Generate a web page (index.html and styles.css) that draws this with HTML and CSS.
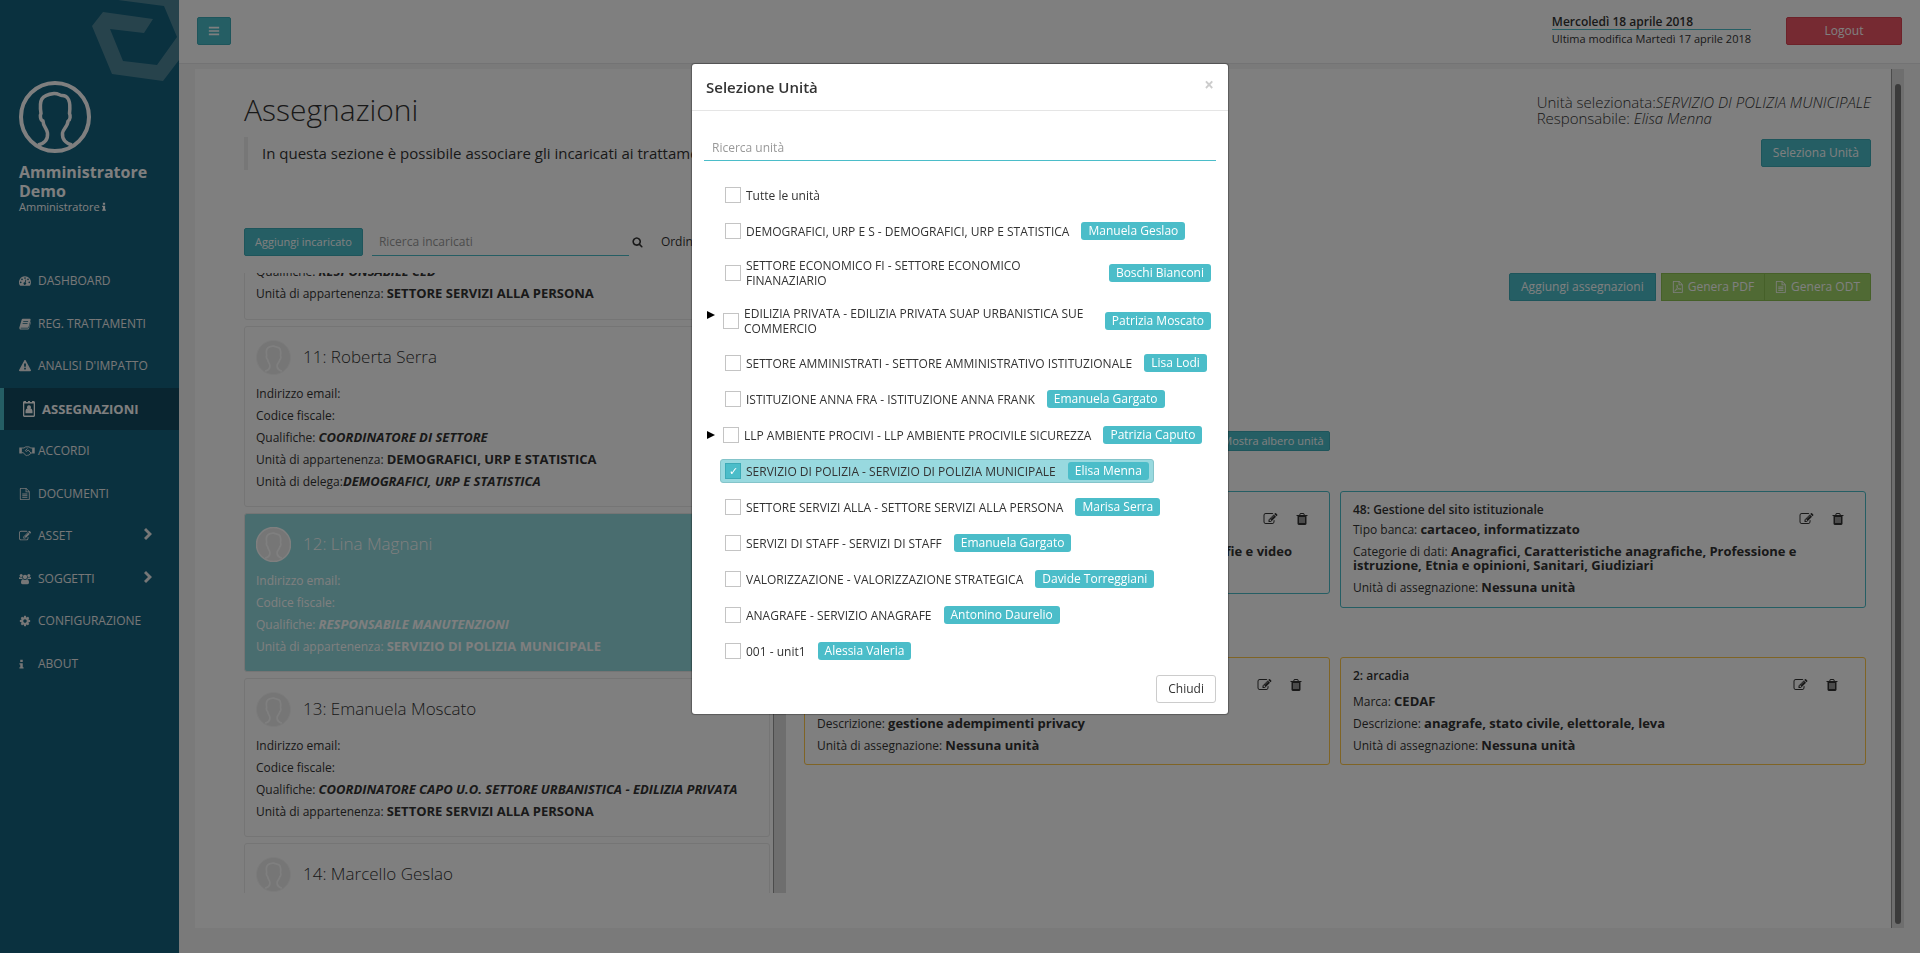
FILE: index.html
```html
<!DOCTYPE html>
<html lang="it">
<head>
<meta charset="utf-8">
<title>Assegnazioni</title>
<link rel="stylesheet" href="styles.css">
</head>
<body>
<svg class="sprite" aria-hidden="true">
  <symbol id="bars" viewBox="0 0 14 14"><path d="M1 2h12v2H1zM1 6h12v2H1zM1 10h12v2H1z"/></symbol>
  <symbol id="dashboard" viewBox="0 0 14 14"><path fill-rule="evenodd" d="M7 1.500a7 7 0 0 1 7 7c0 1.400-.4 2.700-1.100 3.800-.1.100-.2.200-.4.200H1.500c-.2 0-.3-.1-.4-.2A7 7 0 0 1 7 1.500zM2 7.500a1 1 0 1 0 0 2 1 1 0 0 0 0-2zM3.500 4a1 1 0 1 0 0 2 1 1 0 0 0 0-2zM7 2.500a1 1 0 1 0 0 2 1 1 0 0 0 0-2zM10.500 4a1 1 0 1 0 0 2 1 1 0 0 0 0-2zM12 7.500a1 1 0 1 0 0 2 1 1 0 0 0 0-2zM7.600 5.200l-.9 3.300a1.500 1.500 0 1 0 1 .3l.8-3.300z"/></symbol>
  <symbol id="book" viewBox="0 0 14 14"><path fill-rule="evenodd" d="M4.500 1h8c.7 0 1.200.7 1 1.400l-2.300 8c-.2.700-.8 1-1.500 1H2.500c-.6 0-.8.500-.4.900h8.200c.6 0 1-.3 1.200-.8L13.600 4c.4.300.5.700.3 1.200l-2.200 7.100c-.2.700-.9 1.200-1.600 1.200H2.200C.8 13.500 0 12 .5 10.800L3 2.200C3.200 1.500 3.800 1 4.500 1zm.6 2.500-.3 1h5.700l.3-1zm-.7 2.300-.3 1h5.700l.3-1z"/></symbol>
  <symbol id="warning" viewBox="0 0 1792 1792"><path d="M1024 1375v-190q0-14-9.500-23.500t-22.500-9.500h-192q-13 0-22.500 9.500t-9.500 23.500v190q0 14 9.500 23.500t22.500 9.500h192q13 0 22.500-9.500t9.500-23.500zm-2-374l18-459q0-12-10-19-13-11-24-11h-220q-11 0-24 11-10 7-10 21l17 457q0 10 10 16.500t24 6.500h185q14 0 23.500-6.500t10.500-16.500zm-14-934l768 1408q35 63-2 126-17 29-46.500 46t-63.500 17h-1536q-34 0-63.500-17t-46.500-46q-37-63-2-126l768-1408q17-31 47-49t65-18 65 18 47 49z"/></symbol>
  <symbol id="badge" viewBox="0 0 12 16"><path fill-rule="evenodd" d="M1 0h2v1h2V0h2v1h2V0h2l1 1v14l-1 1H1l-1-1V1zM1.300 2.500v12h9.400v-12zM6 4.300a1.900 1.900 0 0 1 1.500 3.200C9 7.700 9.500 9 9.500 10.500v1.800h-7v-1.800C2.500 9 3 7.700 4.500 7.500A1.900 1.900 0 0 1 6 4.300z"/></symbol>
  <symbol id="handshake" viewBox="0 0 18 14"><path fill="none" stroke="currentColor" stroke-width="1.100" d="M3 3.500h2.500l2-1.300h3.800L13.500 3.500H15M3 9h1.500l3.200 3c.8.600 1.500.5 1.900-.1 1 .4 1.600 0 1.900-.8.900.1 1.400-.4 1.500-1.200L15 9M9.500 4 7.300 6.300c-.4.700.7 1.600 1.500.9l1.700-1.300 3.200 3.600"/><path d="M0 2.800h3v7H0zM15 2.800h3v7h-3z"/></symbol>
  <symbol id="file" viewBox="0 0 14 14"><path fill-rule="evenodd" d="M1.700 0H8.500L12.500 4v9.200c0 .4-.3.800-.8.800h-10c-.4 0-.7-.4-.7-.8V.8C1 .4 1.300 0 1.700 0zM2 1v12h9.500V5H7.700V1zM8.700 1.300V4h2.600zM3.800 6.500h6v1h-6zM3.800 8.500h6v1h-6zM3.800 10.500h6v1h-6z"/></symbol>
  <symbol id="pdf" viewBox="0 0 14 14"><path fill-rule="evenodd" d="M1.700 0H8.500L12.500 4v9.200c0 .4-.3.800-.8.800h-10c-.4 0-.7-.4-.7-.8V.8C1 .4 1.300 0 1.700 0zM2 1v12h9.500V5H7.700V1zM8.700 1.300V4h2.600z"/><path fill="none" stroke="currentColor" stroke-width=".8" d="M3.300 12c1.500-.8 3-4.200 3-6.500 0-1-.8-1-.7 0 .2 2.300 2.200 4.200 4.600 4.200.8 0 .7-.8-.2-.8-2 0-4.500.8-6 1.700-1 .6-1.200 1.300-.7 1.400z"/></symbol>
  <symbol id="edit" viewBox="0 0 1792 1792"><path d="M888 1184l116-116-152-152-116 116v56h96v96h56zm440-720q-16-16-33 1l-350 350q-17 17-1 33t33-1l350-350q17-17 1-33zm80 594v190q0 119-84.500 203.500t-203.500 84.500h-832q-119 0-203.500-84.500t-84.500-203.500v-832q0-119 84.500-203.500t203.500-84.500h832q63 0 117 25 15 7 18 23 3 17-9 29l-49 49q-14 14-32 8-23-6-45-6h-832q-66 0-113 47t-47 113v832q0 66 47 113t113 47h832q66 0 113-47t47-113v-126q0-13 9-22l64-64q15-15 35-7t20 29zm-96-738l288 288-672 672h-288v-288zm444 132l-92 92-288-288 92-92q28-28 68-28t68 28l152 152q28 28 28 68t-28 68z"/></symbol>
  <symbol id="users" viewBox="0 0 15 14"><circle cx="7.500" cy="4.500" r="2.700"/><circle cx="2.700" cy="2.700" r="1.900"/><circle cx="12.300" cy="2.700" r="1.900"/><path d="M5 7.200c1.500 1.200 3.500 1.200 5 0 1.700.2 2.500 1.800 2.500 4.300 0 1.300-.8 2-2 2h-6c-1.200 0-2-.7-2-2 0-2.500.8-4.100 2.500-4.300zM0 7V6c0-.9.400-1.500 1-1.600 1 .8 2.200.8 3 .3C4 5.500 4.300 6.300 4.700 7zM15 7V6c0-.9-.4-1.500-1-1.600-1 .8-2.200.8-3 .3 0 .8-.3 1.600-.7 2.300z"/></symbol>
  <symbol id="cog" viewBox="0 0 1792 1792"><path d="M1152 896q0-106-75-181t-181-75-181 75-75 181 75 181 181 75 181-75 75-181zm512-109v222q0 12-8 23t-20 13l-185 28q-19 54-39 91 35 50 107 138 10 12 10 25t-9 23q-27 37-99 108t-94 71q-12 0-26-9l-138-108q-44 23-91 38-16 136-29 186-7 28-36 28h-222q-14 0-24.500-8.500t-11.500-21.500l-28-184q-49-16-90-37l-141 107q-10 9-25 9-14 0-25-11-126-114-165-168-7-10-7-23 0-12 8-23 15-21 51-66.500t54-70.500q-27-50-41-99l-183-27q-13-2-21-12.500t-8-23.500v-222q0-12 8-23t19-13l186-28q14-46 39-92-40-57-107-138-10-12-10-24 0-10 9-23 26-36 98.500-107.500t94.500-71.500q13 0 26 10l138 107q44-23 91-38 16-136 29-186 7-28 36-28h222q14 0 24.500 8.500t11.500 21.500l28 184q49 16 90 37l142-107q9-9 24-9 13 0 25 10 129 119 165 170 7 8 7 22 0 12-8 23-15 21-51 66.500t-54 70.500q26 50 41 98l183 28q13 2 21 12.500t8 23.500z"/></symbol>
  <symbol id="info" viewBox="0 0 5 12"><path d="M1 1h3v2.500H1zM0 5h4v5h1v1.500H0V10h1V6.500H0z"/></symbol>
  <symbol id="chevron" viewBox="0 0 8 12"><path d="M0 2l2-2 6 6-6 6-2-2 4-4z"/></symbol>
  <symbol id="triangle" viewBox="0 0 8 8"><path d="M0 0l8 4-8 4z"/></symbol>
  <symbol id="search" viewBox="0 0 1792 1792"><path d="M1216 832q0-185-131.500-316.500t-316.500-131.500-316.500 131.500-131.500 316.500 131.500 316.500 316.500 131.500 316.500-131.500 131.500-316.500zm512 832q0 52-38 90t-90 38q-54 0-90-38l-343-342q-179 124-399 124-143 0-273.500-55.500t-225-150-150-225-55.500-273.500 55.500-273.500 150-225 225-150 273.500-55.500 273.500 55.500 225 150 150 225 55.500 273.500q0 220-124 399l343 343q37 37 37 90z"/></symbol>
  <symbol id="trash" viewBox="128 0 1536 1792"><path d="M704 1376v-704q0-14-9-23t-23-9h-64q-14 0-23 9t-9 23v704q0 14 9 23t23 9h64q14 0 23-9t9-23zm256 0v-704q0-14-9-23t-23-9h-64q-14 0-23 9t-9 23v704q0 14 9 23t23 9h64q14 0 23-9t9-23zm256 0v-704q0-14-9-23t-23-9h-64q-14 0-23 9t-9 23v704q0 14 9 23t23 9h64q14 0 23-9t9-23zm-544-992h448l-48-117q-7-9-17-11h-317q-10 2-17 11zm928 32v64q0 14-9 23t-23 9h-96v948q0 83-47 143.500t-113 60.500h-832q-66 0-113-58.500t-47-141.500v-952h-96q-14 0-23-9t-9-23v-64q0-14 9-23t23-9h309l70-167q15-37 54-63t79-26h320q40 0 79 26t54 63l70 167h309q14 0 23 9t9 23z"/></symbol>
  <symbol id="person" viewBox="0 0 72 72"><path fill="none" stroke="currentColor" stroke-width="3.500" stroke-linejoin="round" d="M19 64c8-2 10-7 9.500-12-.4-4-4.500-7-4.500-12-3-1-3-6-2-7.500C20 19 22 14 35 12.500c4-.3 6 2 8 2 6 0 9 5 7.500 18 1 2 1 6.500-1.500 7.500 0 5-5 8-5.500 12C43 58 46 62 53 64"/></symbol>
</svg>

<div class="app">
  <aside class="sidebar">
    <svg class="brand" viewBox="0 0 87 82" aria-hidden="true"><path d="M26 0h61v60L71 81 20 74 0 26 11 12l50 7-9 14-34-4 13 32 34 4 20-28L72 6z"/></svg>
    <svg class="avatar" viewBox="0 0 72 72" aria-hidden="true"><circle cx="36" cy="36" r="34" fill="none" stroke="currentColor" stroke-width="4"/><use href="#person"/></svg>
    <strong class="user-name">Amministratore Demo</strong>
    <span class="user-role">Amministratore <svg class="info-icon"><use href="#info"/></svg></span>
    <nav class="menu">
      <a href="#"><svg class="icon"><use href="#dashboard"/></svg>DASHBOARD</a>
      <a href="#"><svg class="icon"><use href="#book"/></svg>REG. TRATTAMENTI</a>
      <a href="#"><svg class="icon"><use href="#warning"/></svg>ANALISI D'IMPATTO</a>
      <a href="#" class="active"><svg class="icon tall"><use href="#badge"/></svg>ASSEGNAZIONI</a>
      <a href="#"><svg class="icon wide"><use href="#handshake"/></svg>ACCORDI</a>
      <a href="#"><svg class="icon"><use href="#file"/></svg>DOCUMENTI</a>
      <a href="#"><svg class="icon"><use href="#edit"/></svg>ASSET<svg class="chevron"><use href="#chevron"/></svg></a>
      <a href="#"><svg class="icon"><use href="#users"/></svg>SOGGETTI<svg class="chevron"><use href="#chevron"/></svg></a>
      <a href="#"><svg class="icon"><use href="#cog"/></svg>CONFIGURAZIONE</a>
      <a href="#"><svg class="icon slim"><use href="#info"/></svg>ABOUT</a>
    </nav>
  </aside>

  <div class="main">
    <header class="topbar">
      <button class="btn burger" aria-label="Menu"><svg class="icon"><use href="#bars"/></svg></button>
      <div class="dates"><strong>Mercoledì 18 aprile 2018</strong><span>Ultima modifica Martedì 17 aprile 2018</span></div>
      <button class="btn danger">Logout</button>
    </header>

    <div class="panel">
      <div class="content">
        <div class="head">
          <div class="intro">
            <h1>Assegnazioni</h1>
            <blockquote>In questa sezione è possibile associare gli incaricati ai trattamenti</blockquote>
          </div>
          <div class="unit">
            <p>Unità selezionata:<em>SERVIZIO DI POLIZIA MUNICIPALE</em><br>Responsabile: <em>Elisa Menna</em></p>
            <button class="btn">Seleziona Unità</button>
          </div>
        </div>

        <div class="columns">
          <section class="people">
            <div class="people-tools">
              <button class="btn small">Aggiungi incaricato</button>
              <input class="line-input" type="text" placeholder="Ricerca incaricati" aria-label="Ricerca incaricati">
              <svg class="search-icon" aria-hidden="true"><use href="#search"/></svg>
              <span>Ordina</span>
            </div>
            <div class="people-scroll">
              <div class="people-list">
                <article class="person partial">
                  <p>Qualifiche: <b><i>RESPONSABILE CED</i></b></p>
                  <p>Unità di appartenenza: <b>SETTORE SERVIZI ALLA PERSONA</b></p>
                </article>
                <article class="person">
                  <h2><svg class="face" viewBox="0 0 72 72"><circle cx="36" cy="36" r="35"/><use href="#person"/></svg>11: Roberta Serra</h2>
                  <p>Indirizzo email:</p>
                  <p>Codice fiscale:</p>
                  <p>Qualifiche: <b><i>COORDINATORE DI SETTORE</i></b></p>
                  <p>Unità di appartenenza: <b>DEMOGRAFICI, URP E STATISTICA</b></p>
                  <p>Unità di delega:<b><i>DEMOGRAFICI, URP E STATISTICA</i></b></p>
                </article>
                <article class="person selected">
                  <h2><svg class="face" viewBox="0 0 72 72"><circle cx="36" cy="36" r="35"/><use href="#person"/></svg>12: Lina Magnani</h2>
                  <p>Indirizzo email:</p>
                  <p>Codice fiscale:</p>
                  <p>Qualifiche: <b><i>RESPONSABILE MANUTENZIONI</i></b></p>
                  <p>Unità di appartenenza: <b>SERVIZIO DI POLIZIA MUNICIPALE</b></p>
                </article>
                <article class="person">
                  <h2><svg class="face" viewBox="0 0 72 72"><circle cx="36" cy="36" r="35"/><use href="#person"/></svg>13: Emanuela Moscato</h2>
                  <p>Indirizzo email:</p>
                  <p>Codice fiscale:</p>
                  <p>Qualifiche: <b><i>COORDINATORE CAPO U.O. SETTORE URBANISTICA - EDILIZIA PRIVATA</i></b></p>
                  <p>Unità di appartenenza: <b>SETTORE SERVIZI ALLA PERSONA</b></p>
                </article>
                <article class="person">
                  <h2><svg class="face" viewBox="0 0 72 72"><circle cx="36" cy="36" r="35"/><use href="#person"/></svg>14: Marcello Geslao</h2>
                </article>
              </div>
              <div class="track"></div>
            </div>
          </section>

          <section class="assignments">
            <div class="actions">
              <button class="btn first">Aggiungi assegnazioni</button>
              <div class="group">
                <button class="btn green"><svg class="icon"><use href="#pdf"/></svg>Genera PDF</button>
                <button class="btn green"><svg class="icon"><use href="#file"/></svg>Genera ODT</button>
              </div>
            </div>
            <div class="cards-top"><button class="btn tiny">Mostra albero unità</button></div>
            <div class="cards">
              <article class="card">
                <div class="card-tools"><button aria-label="Modifica"><svg><use href="#edit"/></svg></button><button aria-label="Elimina"><svg class="bin"><use href="#trash"/></svg></button></div>
                <h3>&nbsp;</h3>
                <p>Tipo banca:</p>
                <p class="to-end"><b>fotografie e video</b></p>
                <p>Unità di assegnazione:</p>
              </article>
              <article class="card">
                <div class="card-tools"><button aria-label="Modifica"><svg><use href="#edit"/></svg></button><button aria-label="Elimina"><svg class="bin"><use href="#trash"/></svg></button></div>
                <h3>48: Gestione del sito istituzionale</h3>
                <p>Tipo banca: <b>cartaceo, informatizzato</b></p>
                <p>Categorie di dati: <b>Anagrafici, Caratteristiche anagrafiche, Professione e istruzione, Etnia e opinioni, Sanitari, Giudiziari</b></p>
                <p>Unità di assegnazione: <b>Nessuna unità</b></p>
              </article>
            </div>
            <div class="cards assets">
              <article class="card">
                <div class="card-tools"><button aria-label="Modifica"><svg><use href="#edit"/></svg></button><button aria-label="Elimina"><svg class="bin"><use href="#trash"/></svg></button></div>
                <h3>&nbsp;</h3>
                <p>Marca:</p>
                <p>Descrizione: <b>gestione adempimenti privacy</b></p>
                <p>Unità di assegnazione: <b>Nessuna unità</b></p>
              </article>
              <article class="card">
                <div class="card-tools"><button aria-label="Modifica"><svg><use href="#edit"/></svg></button><button aria-label="Elimina"><svg class="bin"><use href="#trash"/></svg></button></div>
                <h3>2: arcadia</h3>
                <p>Marca: <b>CEDAF</b></p>
                <p>Descrizione: <b>anagrafe, stato civile, elettorale, leva</b></p>
                <p>Unità di assegnazione: <b>Nessuna unità</b></p>
              </article>
            </div>
          </section>
        </div>
      </div>
      <div class="track page-track"><div class="thumb"></div></div>
    </div>
  </div>
</div>

<div class="backdrop">
  <div class="modal" role="dialog" aria-labelledby="modal-title">
    <div class="modal-head"><h4 id="modal-title">Selezione Unità</h4><button class="close" aria-label="Chiudi finestra">×</button></div>
    <div class="modal-body">
      <input class="line-input" type="text" placeholder="Ricerca unità" aria-label="Ricerca unità">
      <ul class="units">
        <li><label><input type="checkbox"><span>Tutte le unità</span></label></li>
        <li><label><input type="checkbox"><span>DEMOGRAFICI, URP E S - DEMOGRAFICI, URP E STATISTICA</span><span class="tag">Manuela Geslao</span></label></li>
        <li><label><input type="checkbox"><span>SETTORE ECONOMICO FI - SETTORE ECONOMICO FINANAZIARIO</span><span class="tag">Boschi Bianconi</span></label></li>
        <li class="parent"><svg class="triangle" aria-hidden="true"><use href="#triangle"/></svg><label><input type="checkbox"><span>EDILIZIA PRIVATA - EDILIZIA PRIVATA SUAP URBANISTICA SUE COMMERCIO</span><span class="tag">Patrizia Moscato</span></label></li>
        <li><label><input type="checkbox"><span>SETTORE AMMINISTRATI - SETTORE AMMINISTRATIVO ISTITUZIONALE</span><span class="tag">Lisa Lodi</span></label></li>
        <li><label><input type="checkbox"><span>ISTITUZIONE ANNA FRA - ISTITUZIONE ANNA FRANK</span><span class="tag">Emanuela Gargato</span></label></li>
        <li class="parent"><svg class="triangle" aria-hidden="true"><use href="#triangle"/></svg><label><input type="checkbox"><span>LLP AMBIENTE PROCIVI - LLP AMBIENTE PROCIVILE SICUREZZA</span><span class="tag">Patrizia Caputo</span></label></li>
        <li><label class="picked"><input type="checkbox" checked><span>SERVIZIO DI POLIZIA - SERVIZIO DI POLIZIA MUNICIPALE</span><span class="tag">Elisa Menna</span></label></li>
        <li><label><input type="checkbox"><span>SETTORE SERVIZI ALLA - SETTORE SERVIZI ALLA PERSONA</span><span class="tag">Marisa Serra</span></label></li>
        <li><label><input type="checkbox"><span>SERVIZI DI STAFF - SERVIZI DI STAFF</span><span class="tag">Emanuela Gargato</span></label></li>
        <li><label><input type="checkbox"><span>VALORIZZAZIONE - VALORIZZAZIONE STRATEGICA</span><span class="tag">Davide Torreggiani</span></label></li>
        <li><label><input type="checkbox"><span>ANAGRAFE - SERVIZIO ANAGRAFE</span><span class="tag">Antonino Daurelio</span></label></li>
        <li><label><input type="checkbox"><span>001 - unit1</span><span class="tag">Alessia Valeria</span></label></li>
      </ul>
    </div>
    <div class="modal-foot"><button class="btn plain">Chiudi</button></div>
  </div>
</div>
</body>
</html>
```
FILE: styles.css
```css
:root {
  --teal: #4bbdc9;
  --teal-dark: #3cabb7;
  --teal-light: #98d9df;
  --ink: #333;
  --line: #e7e7e9;
}
* { box-sizing: border-box; }
body {
  margin: 0;
  font: 12px/18px "Open Sans", "Noto Sans", sans-serif;
  color: var(--ink);
  background: #f4f4f4;
}
h1, h2, h3, h4, p, ul, blockquote { margin: 0; padding: 0; font-weight: inherit; }
button, input { font: inherit; }
svg { fill: currentColor; flex: none; }
.sprite { display: none; }
.app { display: flex; height: 100vh; overflow: hidden; }

/* Sidebar */
.sidebar {
  position: relative;
  flex: none;
  width: 179px;
  padding-top: 81px;
  display: flex;
  flex-direction: column;
  background: #14627f;
  color: #fff;
}
.brand { position: absolute; top: 0; right: 0; width: 87px; height: 82px; fill: #4f8799; }
.avatar { width: 72px; height: 72px; margin-left: 19px; }
.user-name { margin: 10px 19px 0; font-size: 16px; line-height: 19px; }
.user-role { margin-left: 19px; font-size: 11px; line-height: 12px; }
.info-icon { width: 4px; height: 9px; }
.menu { display: flex; flex-direction: column; height: 425px; margin-top: 47px; }
.menu a {
  flex: 1;
  display: flex;
  align-items: center;
  padding: 0 27px 0 19px;
  color: #eee;
  text-decoration: none;
}
.icon { width: 12px; height: 12px; }
.menu .icon { margin-right: 7px; }
.menu .icon.wide { width: 16px; margin-right: 3px; }
.menu .icon.tall { height: 16px; }
.menu .icon.slim { width: 5px; height: 10px; margin-right: 14px; }
.menu .active { border-left: 4px solid var(--teal); background: #124a60; color: #fff; font-size: 13px; font-weight: 700; }
.chevron { width: 8px; height: 12px; margin: 0 0 4px auto; }

/* Top bar */
.main { flex: 1; min-width: 0; display: flex; flex-direction: column; }
.topbar {
  flex: none;
  height: 64px;
  padding: 0 18px 1px;
  display: flex;
  align-items: center;
  background: #fff;
  border-bottom: 1px solid var(--line);
}
.btn {
  display: inline-flex;
  align-items: center;
  justify-content: center;
  gap: 3px;
  height: 28px;
  padding: 0 11px;
  border: 1px solid var(--teal-dark);
  border-radius: 2px;
  background: var(--teal);
  color: #fff;
  white-space: nowrap;
}
.burger { width: 34px; padding: 0; }
.dates { margin-left: auto; }
.dates strong { display: block; font-weight: 600; line-height: 15px; border-bottom: 1px solid var(--teal); }
.dates span { display: block; font-size: 11px; line-height: 18px; }
.danger { width: 116px; margin-left: 35px; background: #ed5565; border-color: #da4453; }
.small { font-size: 11px; padding: 0 10px; }
.tiny { font-size: 11px; height: 20px; padding: 0 5px; }
.green { padding: 0 10px; gap: 4px; background: #a0d468; border-color: #8cc152; }
.plain { background: #fff; border-color: #ccc; border-radius: 3px; color: var(--ink); }

/* Panel */
.panel { flex: 1; min-height: 0; margin: 5px 16px 25px; display: flex; background: #fff; }
.content { flex: 1; min-width: 0; padding: 20px 20px 35px 49px; display: flex; flex-direction: column; }
.track { flex: none; width: 13px; background: #dcdcdc; border-left: 1px solid #999; }
.page-track { padding: 15px 3px 4px; }
.thumb { height: 100%; border-radius: 3px; background: #777; }
.head { display: flex; justify-content: space-between; height: 139px; }
h1 { font-size: 30px; line-height: 42px; font-weight: 300; }
blockquote { margin-top: 6px; padding: 7px 14px; border-left: 4px solid #eee; font-size: 15px; line-height: 19px; }
.unit { display: flex; flex-direction: column; align-items: flex-end; gap: 13px; padding-top: 5px; }
.unit p { font-size: 15px; line-height: 16px; font-weight: 300; }
.columns { flex: 1; min-height: 0; display: grid; grid-template-columns: 542px minmax(0, 1fr); gap: 18px; }
.people { display: flex; flex-direction: column; min-height: 0; }
.people-tools { display: flex; align-items: center; }
.people-tools span { margin-left: 18px; }
.line-input {
  min-width: 0;
  height: 28px;
  padding: 0 7px;
  border: 0;
  border-bottom: 1px solid var(--teal);
  background: transparent;
  color: var(--ink);
}
.line-input::placeholder { color: #999; opacity: 1; }
.people-tools .line-input { width: 257px; margin: 0 3px 0 9px; }
.search-icon { width: 11px; height: 12px; }
.people-scroll { flex: 1; min-height: 0; margin-top: 17px; display: flex; overflow: hidden; }
.people-list { flex: 1; min-width: 0; padding-right: 3px; display: flex; flex-direction: column; gap: 6px; }
.person { flex: none; padding: 12px 11px 13px; border: 1px solid #eaeaea; border-radius: 3px; }
.person p { line-height: 22px; }
.person b, .card b { font-size: 13px; line-height: 12px; }
.person.partial { margin-top: -25px; padding-bottom: 14px; }
.person h2 { display: flex; align-items: center; gap: 12px; height: 36px; margin-bottom: 8px; font-size: 17px; font-weight: 300; }
.face { width: 35px; height: 35px; fill: #ececec; color: #fff; stroke: #f6f6f6; stroke-width: 2; }
.selected { background: #92dade; color: #fff; }
.selected .face { stroke: #fff; stroke-width: 3; }

/* Assignments */
.assignments { min-width: 0; display: flex; flex-direction: column; padding-top: 45px; }
.actions { display: flex; justify-content: flex-end; gap: 5px; }
.actions .first { border-radius: 2px 0 0 2px; }
.group { display: flex; }
.group .btn { border-radius: 0; }
.group .btn + .btn { border-left: 0; border-radius: 0 2px 2px 0; }
.cards-top { width: 50%; padding-right: 8px; margin-top: 130px; display: flex; justify-content: flex-end; }
.cards { display: grid; grid-template-columns: 1fr 1fr; align-items: start; gap: 10px; margin: 40px 5px 0 0; }
.card { position: relative; padding: 9px 12px 8px; border: 1px solid var(--teal); border-radius: 3px; }
.card h3 { font-size: 12px; font-weight: 600; line-height: 18px; }
.card p { line-height: 14px; padding: 4px 0; }
.card .to-end { padding-right: 25px; text-align: right; }
.assets { margin-top: 49px; }
.assets .card { border-color: #ffc84a; padding-bottom: 7px; }
.assets h3 { margin-bottom: 6px; }
.card-tools { position: absolute; top: 20px; right: 21px; display: flex; gap: 18px; }
.assets .card-tools { right: 27px; }
.card-tools button { padding: 0; border: 0; background: none; display: flex; color: inherit; }
.card-tools svg { width: 15px; height: 14px; }
.card-tools .bin { width: 12px; }

/* Modal */
.backdrop {
  position: fixed;
  inset: 0;
  background: rgba(0, 0, 0, .5);
  display: flex;
  justify-content: center;
  align-items: flex-start;
  padding-top: 64px;
}
.modal { width: 536px; background: #fff; border-radius: 3px; box-shadow: 0 0 1px 1px rgba(0, 0, 0, .3); }
.modal-head { display: flex; justify-content: space-between; align-items: flex-start; padding: 13px 14px; border-bottom: 1px solid #e5e5e5; }
.modal-head h4 { font-size: 15px; line-height: 20px; font-weight: 600; }
.close { padding: 0; border: 0; background: none; font-size: 17px; line-height: 16px; font-weight: 700; color: #ccc; }
.modal-body { padding: 21px 12px 0; }
.modal-body .line-input { width: 100%; height: 29px; padding: 2px 8px 0; }
.units { list-style: none; margin-top: 22px; display: flex; flex-direction: column; gap: 12px; padding-left: 16px; }
.units li { display: flex; }
.units label { display: flex; align-items: center; min-height: 24px; padding: 2px 4px; border: 1px solid transparent; border-radius: 3px; line-height: 15px; }
.units input {
  appearance: none;
  flex: none;
  display: grid;
  place-items: center;
  width: 16px;
  height: 16px;
  margin: 0 5px 0 0;
  border: 1px solid #c4c4c4;
  background: #fff;
}
.units input:checked { background: var(--teal); border-color: var(--teal-dark); }
.units input:checked::after { content: "✓"; color: #fff; font-size: 11px; line-height: 14px; }
.units .parent { margin-left: -14px; }
.triangle { width: 8px; height: 8px; margin: 8px 3px 0 1px; color: #000; }
.tag { flex: none; margin-left: 12px; padding: 0 7px; border-radius: 3px; background: var(--teal); color: #fff; line-height: 18px; }
.units .picked { background: var(--teal-light); border-color: #84c4ca; }
.modal-foot { display: flex; justify-content: flex-end; padding: 12px 12px 11px; }
```
